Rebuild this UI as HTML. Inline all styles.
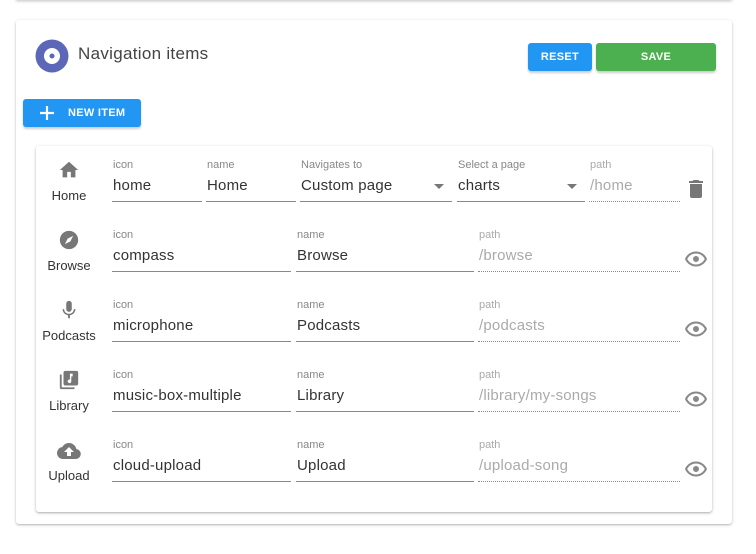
<!DOCTYPE html>
<html><head><style>
*{box-sizing:border-box;margin:0;padding:0}
body{width:756px;height:554px;background:#fff;font-family:"Liberation Sans",sans-serif;position:relative;overflow:hidden;color:#333}
.topcard{position:absolute;left:16px;top:-20px;width:716px;height:20px;background:#fff;box-shadow:0 1px 3px rgba(0,0,0,.25)}
.card{position:absolute;left:16px;top:20px;width:716px;height:504px;background:#fff;border-radius:3px;box-shadow:0 1px 3px rgba(0,0,0,.22),0 1px 1px rgba(0,0,0,.1)}
.inner{position:absolute;left:36px;top:146px;width:676px;height:366px;background:#fff;border-radius:3px;box-shadow:0 1px 3px rgba(0,0,0,.25),0 1px 1px rgba(0,0,0,.1)}
.btn{position:absolute;color:#fff;font-size:11px;font-weight:bold;text-align:center;border-radius:3px;box-shadow:0 2px 2px rgba(0,0,0,.2);letter-spacing:.3px}
.f{position:absolute}
.f .l{position:absolute;top:1px;left:1px;font-size:11px;color:#888;white-space:nowrap}
.f .v{position:absolute;top:19px;left:1px;font-size:15px;color:#333;white-space:nowrap;letter-spacing:.2px}
.f .u{position:absolute;top:43px;left:0;right:0;border-bottom:1px solid #888}
.f.p .l{color:#aaa}.f.p .v{color:#aaa}.f.p .u{border-bottom:1px dotted #888}
.lab{position:absolute;width:60px;text-align:center;font-size:13px;color:#333}
.ic{position:absolute}
.arr{position:absolute;top:26px;right:8px;width:0;height:0;border-left:5px solid transparent;border-right:5px solid transparent;border-top:5px solid #777}
</style></head><body>
<div class="topcard"></div>
<div class="card"></div>
<svg style="position:absolute;left:35px;top:39px" width="34" height="34"><circle cx="17" cy="17" r="16.5" fill="#5c67b8"/><circle cx="17" cy="17" r="8" fill="#fff"/><circle cx="17" cy="17" r="2.5" fill="#5c67b8"/></svg>
<div style="position:absolute;left:78px;top:44px;font-size:17px;color:#444;letter-spacing:.3px">Navigation items</div>
<div class="btn" style="left:528px;top:43px;width:64px;height:28px;line-height:28px;background:#2196f3">RESET</div>
<div class="btn" style="left:596px;top:43px;width:120px;height:28px;line-height:28px;background:#4caf50">SAVE</div>
<div class="btn" style="left:23px;top:99px;width:118px;height:28px;line-height:28px;background:#2196f3;text-align:left;padding-left:45px">NEW ITEM</div>
<svg style="position:absolute;left:39px;top:105px" width="16" height="16"><path d="M8 1v14M1 8h14" stroke="#fff" stroke-width="2.2"/></svg>
<div class="inner"></div>

<svg class="ic" style="left:58px;top:159px" width="22" height="22" viewBox="0 0 24 24"><path d="M10 20v-6h4v6h5v-8h3L12 3 2 12h3v8z" fill="#777"/></svg>
<div class="lab" style="left:39px;top:188px">Home</div>
<div class="f" style="left:112px;top:158px;width:90px"><div class="l">icon</div><div class="v">home</div><div class="u"></div></div>
<div class="f" style="left:206px;top:158px;width:90px"><div class="l">name</div><div class="v">Home</div><div class="u"></div></div>
<div class="f" style="left:300px;top:158px;width:152px"><div class="l">Navigates to</div><div class="v">Custom page</div><div class="u"></div><div class="arr"></div></div>
<div class="f" style="left:457px;top:158px;width:128px"><div class="l">Select a page</div><div class="v">charts</div><div class="u"></div><div class="arr"></div></div>
<div class="f p" style="left:589px;top:158px;width:91px"><div class="l">path</div><div class="v">/home</div><div class="u"></div></div>
<svg class="ic" style="left:684px;top:177px" width="24" height="24" viewBox="0 0 24 24"><path d="M6 19a2 2 0 0 0 2 2h8a2 2 0 0 0 2-2V7H6zM19 4h-3.5l-1-1h-5l-1 1H5v2h14z" fill="#777"/></svg>

<svg class="ic" style="left:58px;top:229px" width="22" height="22" viewBox="0 0 24 24"><circle cx="12" cy="12" r="10" fill="#777"/><path d="M16.5 7.5l-6 3-3 6 6-3z" fill="#fff"/></svg>
<div class="lab" style="left:39px;top:258px">Browse</div>
<div class="f" style="left:112px;top:228px;width:179px"><div class="l">icon</div><div class="v">compass</div><div class="u"></div></div>
<div class="f" style="left:296px;top:228px;width:178px"><div class="l">name</div><div class="v">Browse</div><div class="u"></div></div>
<div class="f p" style="left:478px;top:228px;width:202px"><div class="l">path</div><div class="v">/browse</div><div class="u"></div></div>

<svg class="ic" style="left:58px;top:299px" width="22" height="22" viewBox="0 0 24 24"><path d="M12 14a3 3 0 0 0 3-3V5a3 3 0 0 0-6 0v6a3 3 0 0 0 3 3zm5.3-3c0 3-2.5 5.1-5.3 5.1S6.7 14 6.7 11H5c0 3.4 2.7 6.2 6 6.7V21h2v-3.3c3.3-.5 6-3.3 6-6.7z" fill="#777"/></svg>
<div class="lab" style="left:39px;top:328px">Podcasts</div>
<div class="f" style="left:112px;top:298px;width:179px"><div class="l">icon</div><div class="v">microphone</div><div class="u"></div></div>
<div class="f" style="left:296px;top:298px;width:178px"><div class="l">name</div><div class="v">Podcasts</div><div class="u"></div></div>
<div class="f p" style="left:478px;top:298px;width:202px"><div class="l">path</div><div class="v">/podcasts</div><div class="u"></div></div>

<svg class="ic" style="left:58px;top:369px" width="22" height="22" viewBox="0 0 24 24"><path d="M4 6H2v14a2 2 0 0 0 2 2h14v-2H4z" fill="#777"/><rect x="6" y="2" width="16" height="16" rx="2" fill="#777"/><path d="M16 5h-3v6.5a2 2 0 1 0 1.5 2V8H16z" fill="#fff"/></svg>
<div class="lab" style="left:39px;top:398px">Library</div>
<div class="f" style="left:112px;top:368px;width:179px"><div class="l">icon</div><div class="v">music-box-multiple</div><div class="u"></div></div>
<div class="f" style="left:296px;top:368px;width:178px"><div class="l">name</div><div class="v">Library</div><div class="u"></div></div>
<div class="f p" style="left:478px;top:368px;width:202px"><div class="l">path</div><div class="v">/library/my-songs</div><div class="u"></div></div>

<svg class="ic" style="left:57px;top:439px" width="24" height="24" viewBox="0 0 24 24"><path d="M19.35 10.04A7.49 7.49 0 0 0 12 4C9.11 4 6.6 5.64 5.35 8.04A6 6 0 0 0 6 20h13a5 5 0 0 0 .35-9.96z" fill="#777"/><path d="M14 13v4h-4v-4H7l5-5 5 5z" fill="#fff"/></svg>
<div class="lab" style="left:39px;top:468px">Upload</div>
<div class="f" style="left:112px;top:438px;width:179px"><div class="l">icon</div><div class="v">cloud-upload</div><div class="u"></div></div>
<div class="f" style="left:296px;top:438px;width:178px"><div class="l">name</div><div class="v">Upload</div><div class="u"></div></div>
<div class="f p" style="left:478px;top:438px;width:202px"><div class="l">path</div><div class="v">/upload-song</div><div class="u"></div></div>

<svg class="ic" style="left:684px;top:247px" width="24" height="24" viewBox="0 0 24 24"><path d="M12 4.5C7 4.5 2.7 7.6 1 12c1.7 4.4 6 7.5 11 7.5s9.3-3.1 11-7.5c-1.7-4.4-6-7.5-11-7.5zm0 13c-3.8 0-7.1-2.2-8.8-5.5C4.9 8.7 8.2 6.5 12 6.5s7.1 2.2 8.8 5.5c-1.7 3.3-5 5.5-8.8 5.5zM12 9a3 3 0 1 0 0 6 3 3 0 0 0 0-6z" fill="#888"/></svg>
<svg class="ic" style="left:684px;top:317px" width="24" height="24" viewBox="0 0 24 24"><path d="M12 4.5C7 4.5 2.7 7.6 1 12c1.7 4.4 6 7.5 11 7.5s9.3-3.1 11-7.5c-1.7-4.4-6-7.5-11-7.5zm0 13c-3.8 0-7.1-2.2-8.8-5.5C4.9 8.7 8.2 6.5 12 6.5s7.1 2.2 8.8 5.5c-1.7 3.3-5 5.5-8.8 5.5zM12 9a3 3 0 1 0 0 6 3 3 0 0 0 0-6z" fill="#888"/></svg>
<svg class="ic" style="left:684px;top:387px" width="24" height="24" viewBox="0 0 24 24"><path d="M12 4.5C7 4.5 2.7 7.6 1 12c1.7 4.4 6 7.5 11 7.5s9.3-3.1 11-7.5c-1.7-4.4-6-7.5-11-7.5zm0 13c-3.8 0-7.1-2.2-8.8-5.5C4.9 8.7 8.2 6.5 12 6.5s7.1 2.2 8.8 5.5c-1.7 3.3-5 5.5-8.8 5.5zM12 9a3 3 0 1 0 0 6 3 3 0 0 0 0-6z" fill="#888"/></svg>
<svg class="ic" style="left:684px;top:457px" width="24" height="24" viewBox="0 0 24 24"><path d="M12 4.5C7 4.5 2.7 7.6 1 12c1.7 4.4 6 7.5 11 7.5s9.3-3.1 11-7.5c-1.7-4.4-6-7.5-11-7.5zm0 13c-3.8 0-7.1-2.2-8.8-5.5C4.9 8.7 8.2 6.5 12 6.5s7.1 2.2 8.8 5.5c-1.7 3.3-5 5.5-8.8 5.5zM12 9a3 3 0 1 0 0 6 3 3 0 0 0 0-6z" fill="#888"/></svg>
</body></html>
